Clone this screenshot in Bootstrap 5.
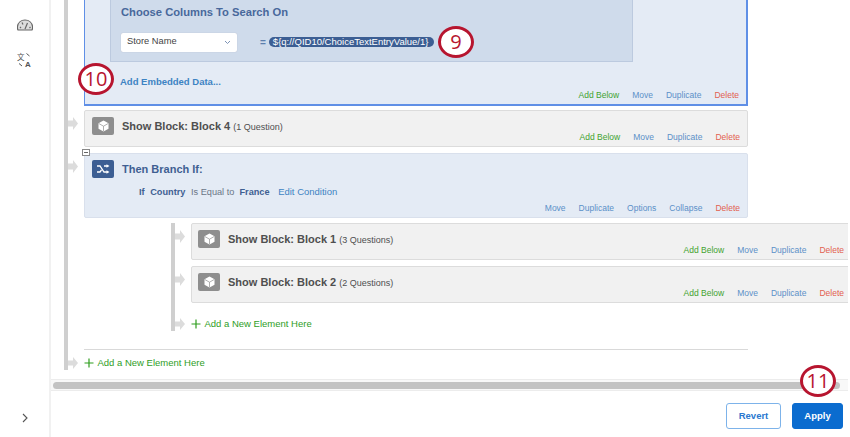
<!doctype html>
<html lang="en">
<head>
<meta charset="utf-8">
<title>Survey Flow</title>
<link rel="stylesheet" href="https://cdn.jsdelivr.net/npm/bootstrap@5.3.0/dist/css/bootstrap.min.css">
<style>
html,body{height:437px;overflow:hidden;background:#fff;font-family:"Liberation Sans",Arial,sans-serif;font-size:10px;}
.shell{height:437px;position:relative;}
.rail{width:51px;border-right:2px solid #f1f1f1;flex:none;padding-top:19px;padding-bottom:14px;}
.rail svg{display:block;}
.rail-gap{margin-top:21px;}
.stage{min-width:0;margin-right:2px;}
.canvas{height:379px;overflow:hidden;padding-left:13px;}
.tree{border-left:4px solid #cfcfcf;margin-bottom:-10px;}
.subtree{margin-left:103px;margin-top:5px;border-left:4px solid #cfcfcf;margin-bottom:-6px;}
.arrow{width:16px;flex:none;}
.sel-panel{width:664px;height:106px;background:#e4ebf5;border:2px solid #5f8fe6;border-top:0;border-left-width:1.5px;position:relative;}
.inner-panel{margin-left:25px;width:523px;height:62px;background:#cfdbeb;border:1px solid #bccadf;border-top:0;padding:3px 0 0 10px;}
.inner-title{font-size:11.2px;font-weight:700;color:#48689b;line-height:18px;}
.select-row{margin-top:12px;}
.fake-select{width:116px;height:18.5px;background:#fff;border-radius:2px;box-shadow:0 0 1px #aab;color:#444;font-size:9.3px;padding:0 6px 0 6px;}
.eq{color:#5d7fae;font-size:10px;font-weight:700;margin-left:23px;margin-right:3px;}
.pill{background:#3c5e93;color:#fff;font-size:9.5px;line-height:10px;height:10px;padding:0 4px;border-radius:5px;white-space:nowrap;width:165px;}
.embed{color:#3d83c3;font-weight:700;font-size:9.5px;margin:13px 0 0 35px;line-height:14px;}
.blk{width:664px;flex:none;background:#f1f1f1;border:1px solid #dcdcdc;border-bottom-width:1.5px;border-radius:2px;height:37px;padding:6px 8px 0 7px;position:relative;}
.blk-branch{background:#e4ebf5;border-color:#d9e0ec;height:65px;}
.blk-nested{width:661px;padding-left:6px;}
.tile{width:22px;height:18px;border-radius:2px;background:#8e8e8e;flex:none;margin-right:8px;}
.tile-branch{background:#3c5e93;}
.blk-title{font-size:11px;font-weight:700;color:#4f4f4f;line-height:18px;white-space:nowrap;}
.blk-branch .blk-title{color:#3f5f92;}
.count{font-size:9px;font-weight:400;}
.acts{font-size:8.5px;line-height:12px;gap:13px;color:#5b90c8;white-space:nowrap;}
.acts.abs-foot{position:absolute;right:7px;bottom:3px;}
.t-green{color:#3fa32f;}
.t-red{color:#e2604f;}
.cond{font-size:9.2px;color:#6b7687;margin:7px 0 0 47px;line-height:14px;white-space:nowrap;}
.cond b{color:#3f5f92;margin-right:3px;}
.cond a{color:#3d83c3;text-decoration:none;margin-left:3px;font-size:9.5px;}
.add-row{color:#2f9e1f;font-size:9.5px;line-height:14px;white-space:nowrap;}
.add-row span{margin-left:3.5px;}
.collapse-box{position:absolute;left:-3px;top:-5px;width:8px;height:7px;background:#fff;border:1px solid #888;}
.collapse-box::after{content:"";display:block;margin:2px 1px 0;height:1px;background:#666;}
.rule{width:664px;border-top:1.5px solid #d9d9d9;margin:24px 0 0 16px;height:0;}
.track{height:12px;background:#f8f8f8;border-top:1px solid #ececec;border-bottom:1px solid #ececec;padding:2px 8px 0 2px;flex:none;}
.thumb{height:7px;background:#c3c3c3;border-radius:4px;}
.foot{flex:1;padding:12px 5px 0 0;gap:11px;}
.btn-rev,.btn-app{height:26px;font-size:9.5px;font-weight:700;border-radius:3px;padding:0;line-height:24px;}
.btn-rev{width:55px;background:#fff;border:1px solid #7db3ea;color:#2a78cf;}
.btn-app{width:51px;background:#0b6ccf;border:1px solid #0b6ccf;color:#fff;}
.callout{position:absolute;background:#fff;border:3px solid #b7152f;border-radius:50%;color:#b7152f;font-family:"Open Sans",sans-serif;font-size:20px;line-height:1;display:flex;align-items:center;justify-content:center;width:36px;height:32px;}
</style>
</head>
<body>
<div class="shell d-flex">
  <aside class="rail d-flex flex-column align-items-center">
    <svg width="16" height="12" viewBox="0 0 16 12" fill="none" stroke="#666" stroke-width="1.2"><path d="M1 11h14c.6-1 .6-2.500.5-3.500C15 3.800 12 1 8 1S1 3.800.5 7.500C.4 8.500.4 10 1 11z" fill="#ddd"/><path d="M8 10l2.500-6M4 9l-1-1M12.500 9l1-1M5 3.500l1 2"/></svg>
    <svg class="rail-gap" width="16" height="16" viewBox="0 0 16 16"><text x="0" y="8" font-family="Noto Sans CJK SC" font-size="7.500" fill="#555">文</text><text x="8" y="15" font-family="Liberation Sans" font-weight="700" font-size="8" fill="#555">A</text><path d="M9.500 1.500l3 2.500M2 11.500l3 2.500" stroke="#555" stroke-width="1" fill="none"/></svg>
    <svg class="mt-auto" width="8" height="10" viewBox="0 0 8 10" fill="none" stroke="#555" stroke-width="1.100"><path d="M2 1l4 4-4 4"/></svg>
  </aside>
  <main class="stage flex-grow-1 d-flex flex-column">
    <div class="canvas flex-shrink-0">
      <div class="tree">
        <div class="d-flex">
          <div class="arrow"></div>
          <section class="sel-panel">
            <div class="inner-panel">
              <div class="inner-title">Choose Columns To Search On</div>
              <div class="select-row d-flex align-items-center">
                <div class="fake-select d-flex align-items-center justify-content-between"><span>Store Name</span><svg width="7" height="5" viewBox="0 0 7 5" fill="none" stroke="#7d93b5" stroke-width="1"><path d="M1 1l2.500 2.500L6 1"/></svg></div>
                <span class="eq">=</span>
                <span class="pill">${q://QID10/ChoiceTextEntryValue/1}</span>
              </div>
            </div>
            <div class="embed">Add Embedded Data...</div>
            <div class="acts abs-foot d-flex"><span class="t-green">Add Below</span><span>Move</span><span>Duplicate</span><span class="t-red">Delete</span></div>
          </section>
        </div>
        <div class="d-flex" style="margin-top:4px">
          <svg class="arrow" height="37" viewBox="0 0 16 37"><path d="M0 10.500h5V7l5 6.500L5 20v-3.500H0z" fill="#dcdcdc"/></svg>
          <section class="blk">
            <div class="d-flex"><div class="tile d-flex align-items-center justify-content-center"><svg width="11" height="12" viewBox="0 0 11 12"><path d="M5.500.500l5 2.800v5.400l-5 2.800-5-2.800V3.300z" fill="#fff"/><path d="M.8 3.500l4.700 2.700 4.700-2.700M5.500 6.200V11" stroke="#8e8e8e" stroke-width=".7" fill="none"/></svg></div><div class="blk-title">Show Block: Block 4 <span class="count">(1 Question)</span></div></div>
            <div class="acts abs-foot d-flex"><span class="t-green">Add Below</span><span>Move</span><span>Duplicate</span><span class="t-red">Delete</span></div>
          </section>
        </div>
        <div class="d-flex" style="margin-top:6px">
          <svg class="arrow" height="37" viewBox="0 0 16 37"><path d="M0 10.500h5V7l5 6.500L5 20v-3.500H0z" fill="#dcdcdc"/></svg>
          <section class="blk blk-branch">
            <span class="collapse-box"></span>
            <div class="d-flex"><div class="tile tile-branch d-flex align-items-center justify-content-center"><svg width="14" height="10" viewBox="0 0 14 10" fill="none" stroke="#fff" stroke-width="1.300"><path d="M1 2h3l4 6h3M1 8h3l1.500-2M8 2h3"/><path d="M10.500.300L13.500 2l-3 1.700zM10.500 6.300L13.500 8l-3 1.700z" fill="#fff" stroke="none"/></svg></div><div class="blk-title">Then Branch If:</div></div>
            <div class="cond"><b>If</b> <b>Country</b> Is Equal to <b class="ms-1">France</b> <a href="#">Edit Condition</a></div>
            <div class="acts abs-foot d-flex"><span>Move</span><span>Duplicate</span><span>Options</span><span>Collapse</span><span class="t-red">Delete</span></div>
          </section>
        </div>
        <div class="subtree">
          <div class="d-flex">
            <svg class="arrow" height="37" viewBox="0 0 16 37"><path d="M0 10.500h5V7l5 6.500L5 20v-3.500H0z" fill="#dcdcdc"/></svg>
            <section class="blk blk-nested">
              <div class="d-flex"><div class="tile d-flex align-items-center justify-content-center"><svg width="11" height="12" viewBox="0 0 11 12"><path d="M5.500.500l5 2.800v5.400l-5 2.800-5-2.800V3.300z" fill="#fff"/><path d="M.8 3.500l4.700 2.700 4.700-2.700M5.500 6.200V11" stroke="#8e8e8e" stroke-width=".7" fill="none"/></svg></div><div class="blk-title">Show Block: Block 1 <span class="count">(3 Questions)</span></div></div>
              <div class="acts abs-foot d-flex"><span class="t-green">Add Below</span><span>Move</span><span>Duplicate</span><span class="t-red">Delete</span></div>
            </section>
          </div>
          <div class="d-flex" style="margin-top:6px">
            <svg class="arrow" height="37" viewBox="0 0 16 37"><path d="M0 10.500h5V7l5 6.500L5 20v-3.500H0z" fill="#dcdcdc"/></svg>
            <section class="blk blk-nested">
              <div class="d-flex"><div class="tile d-flex align-items-center justify-content-center"><svg width="11" height="12" viewBox="0 0 11 12"><path d="M5.500.500l5 2.800v5.400l-5 2.800-5-2.800V3.300z" fill="#fff"/><path d="M.8 3.500l4.700 2.700 4.700-2.700M5.500 6.200V11" stroke="#8e8e8e" stroke-width=".7" fill="none"/></svg></div><div class="blk-title">Show Block: Block 2 <span class="count">(2 Questions)</span></div></div>
              <div class="acts abs-foot d-flex"><span class="t-green">Add Below</span><span>Move</span><span>Duplicate</span><span class="t-red">Delete</span></div>
            </section>
          </div>
          <div class="d-flex align-items-center add-row" style="margin-top:14px;height:14px">
            <svg class="arrow" height="14" viewBox="0 0 16 14"><path d="M0 4.500h5V1l5 6-5 6V9.500H0z" fill="#dcdcdc"/></svg>
            <svg width="10" height="10" viewBox="0 0 10 10" stroke="#2f9e1f" stroke-width="1.200"><path d="M5 .5v9M.5 5h9"/></svg>
            <span>Add a New Element Here</span>
          </div>
        </div>
        <div class="rule"></div>
        <div class="d-flex align-items-center add-row" style="margin-top:6px;height:14px">
          <svg class="arrow" height="14" viewBox="0 0 16 14"><path d="M0 4.500h5V1l5 6-5 6V9.500H0z" fill="#dcdcdc"/></svg>
          <svg width="10" height="10" viewBox="0 0 10 10" stroke="#2f9e1f" stroke-width="1.200"><path d="M5 .5v9M.5 5h9"/></svg>
          <span>Add a New Element Here</span>
        </div>
      </div>
    </div>
    <div class="track"><div class="thumb"></div></div>
    <footer class="foot d-flex justify-content-end">
      <button type="button" class="btn btn-rev">Revert</button>
      <button type="button" class="btn btn-app">Apply</button>
    </footer>
  </main>
  <span class="callout" style="left:438px;top:26px">9</span>
  <span class="callout" style="left:78px;top:63px">10</span>
  <span class="callout" style="left:800px;top:365px">11</span>
</div>
<script src="https://cdn.jsdelivr.net/npm/bootstrap@5.3.0/dist/js/bootstrap.bundle.min.js"></script>
</body>
</html>
